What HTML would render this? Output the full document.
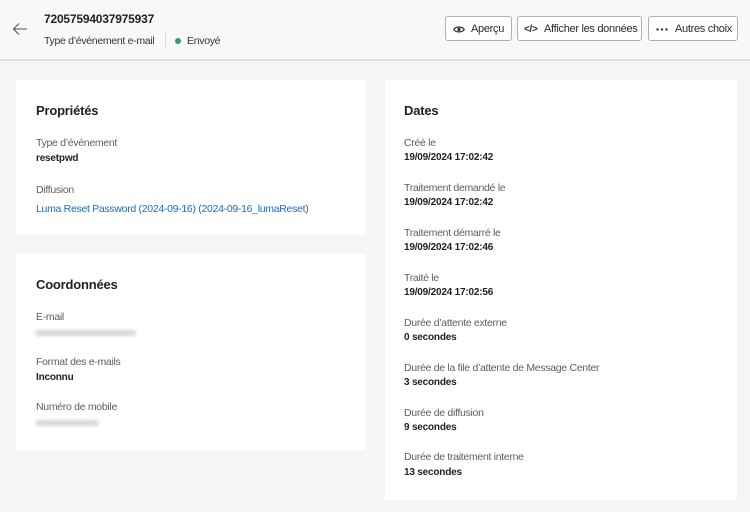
<!DOCTYPE html>
<html><head><meta charset="utf-8"><style>
*{margin:0;padding:0;box-sizing:border-box}
body{width:750px;height:512px;background:#f5f5f5;font-family:"Liberation Sans",sans-serif;position:relative;overflow:hidden;color:#222}
.hdr{position:absolute;left:0;top:0;width:750px;height:61px;background:#f8f8f8;border-bottom:2px solid #dedede}
.t{position:absolute;white-space:nowrap;line-height:14px;height:14px}
.card{position:absolute;background:#fff}
.h{font-size:13px;font-weight:bold;color:#222;letter-spacing:-0.2px}
.l{font-size:10.5px;color:#5e5e5e;letter-spacing:-0.3px}
.v{font-size:10px;font-weight:bold;color:#222;letter-spacing:-0.2px}
.btn{position:absolute;top:16px;height:25px;border:1px solid #b0b0b0;border-radius:3px;background:#fff;font-size:11px;color:#2a2a2a;line-height:25px;letter-spacing:-0.3px;white-space:nowrap}
.blur{position:absolute;height:6px;background:#d8d8d8;border-radius:3px;filter:blur(1.5px)}
</style></head><body>
<div class="hdr"></div>
<svg style="position:absolute;left:12px;top:22px" width="16" height="14" viewBox="0 0 16 14"><path d="M15 7H2M7 1.5L1.5 7L7 12.5" fill="none" stroke="#555" stroke-width="1.1"/></svg>
<div class="t" style="left:44px;top:12px;font-size:12px;font-weight:bold;letter-spacing:-0.2px">72057594037975937</div>
<div class="t" style="left:44px;top:34px;font-size:10.5px;color:#333;letter-spacing:-0.3px">Type d’événement e-mail</div>
<div style="position:absolute;left:165px;top:32px;width:1px;height:17px;background:#ddd"></div>
<div style="position:absolute;left:175px;top:38px;width:6px;height:6px;border-radius:50%;background:#2d9d78"></div>
<div class="t" style="left:187px;top:34px;font-size:10.5px;color:#333;letter-spacing:-0.3px">Envoyé</div>

<div class="btn" style="left:445px;width:67px"><svg style="position:absolute;left:7px;top:8px" width="12" height="9" viewBox="0 0 12 9"><path d="M0.8 4.5C2.5 1.3 9.5 1.3 11.2 4.5C9.5 7.7 2.5 7.7 0.8 4.5Z" fill="none" stroke="#333" stroke-width="1.3"/><circle cx="6" cy="4.5" r="1.6" fill="#333"/></svg><span style="position:absolute;left:25px">Aperçu</span></div>
<div class="btn" style="left:517px;width:125px"><span style="position:absolute;left:6px;font-size:10px;font-weight:bold">&lt;/&gt;</span><span style="position:absolute;left:26px">Afficher les données</span></div>
<div class="btn" style="left:648px;width:90px"><svg style="position:absolute;left:7px;top:11px" width="12" height="3" viewBox="0 0 12 3"><circle cx="1.5" cy="1.5" r="1.2" fill="#333"/><circle cx="6" cy="1.5" r="1.2" fill="#333"/><circle cx="10.5" cy="1.5" r="1.2" fill="#333"/></svg><span style="position:absolute;left:26px">Autres choix</span></div>

<div class="card" style="left:16px;top:80px;width:350px;height:155px"></div>
<div class="t h" style="left:36px;top:104px">Propriétés</div>
<div class="t l" style="left:36px;top:136px">Type d’événement</div>
<div class="t v" style="left:36px;top:152px">resetpwd</div>
<div class="t l" style="left:36px;top:183px">Diffusion</div>
<div class="t" style="left:36px;top:202px;font-size:10.5px;color:#1b6ac9;letter-spacing:-0.3px">Luma Reset Password (2024-09-16) (2024-09-16_lumaReset)</div>

<div class="card" style="left:16px;top:254px;width:350px;height:196px"></div>
<div class="t h" style="left:36px;top:278px">Coordonnées</div>
<div class="t l" style="left:36px;top:310px">E-mail</div>
<div class="blur" style="left:35px;top:330px;width:101px"></div>
<div class="t l" style="left:36px;top:355px">Format des e-mails</div>
<div class="t v" style="left:36px;top:371px">Inconnu</div>
<div class="t l" style="left:36px;top:400px">Numéro de mobile</div>
<div class="blur" style="left:35px;top:420px;width:64px"></div>

<div class="card" style="left:385px;top:80px;width:352px;height:420px"></div>
<div class="t h" style="left:404px;top:104px">Dates</div>
<div class="t l" style="left:404px;top:136px">Créé le</div>
<div class="t v" style="left:404px;top:151px">19/09/2024 17:02:42</div>
<div class="t l" style="left:404px;top:181px">Traitement demandé le</div>
<div class="t v" style="left:404px;top:196px">19/09/2024 17:02:42</div>
<div class="t l" style="left:404px;top:226px">Traitement démarré le</div>
<div class="t v" style="left:404px;top:241px">19/09/2024 17:02:46</div>
<div class="t l" style="left:404px;top:271px">Traité le</div>
<div class="t v" style="left:404px;top:286px">19/09/2024 17:02:56</div>
<div class="t l" style="left:404px;top:316px">Durée d’attente externe</div>
<div class="t v" style="left:404px;top:331px">0 secondes</div>
<div class="t l" style="left:404px;top:361px">Durée de la file d’attente de Message Center</div>
<div class="t v" style="left:404px;top:376px">3 secondes</div>
<div class="t l" style="left:404px;top:406px">Durée de diffusion</div>
<div class="t v" style="left:404px;top:421px">9 secondes</div>
<div class="t l" style="left:404px;top:450px">Durée de traitement interne</div>
<div class="t v" style="left:404px;top:466px">13 secondes</div>
</body></html>
